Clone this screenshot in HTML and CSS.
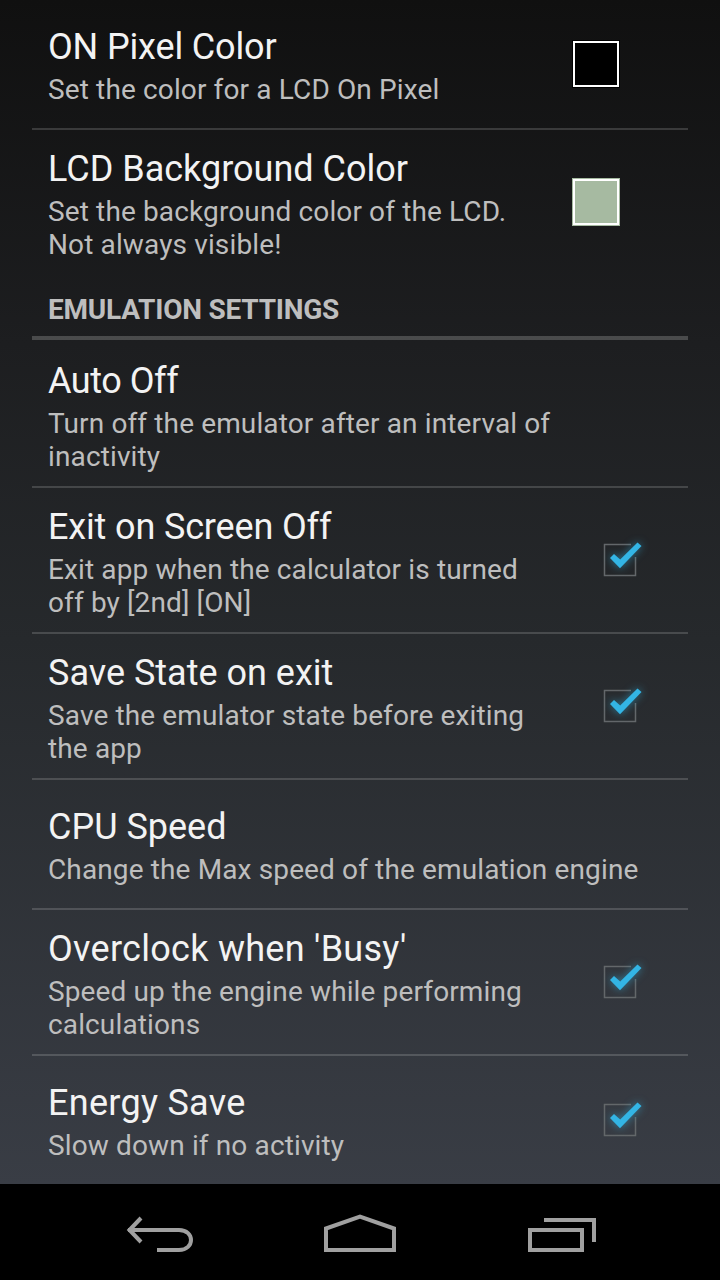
FILE: index.html
```
<!DOCTYPE html>
<html lang="en">
<head>
    <meta charset="UTF-8">
    <meta name="viewport" content="width=device-width, initial-scale=1.0">
    <title>Settings</title>
    <link rel="stylesheet" href="styles.css">
</head>
<body>
    <!-- Shared checkbox drawing -->
    <svg class="defs" width="0" height="0">
        <symbol id="checkbox" viewBox="0 0 64 64">
            <path class="box" d="M43 16.5H16.5V47.5H47.5V29"/>
            <path class="tick" d="M22 30L26 26L32.2 31.5L49.5 14.5L53.5 18L32 40.3Z"/>
        </symbol>
    </svg>

    <main class="settings">
        <div class="item short">
            <div class="text">
                <h2 class="snug">ON Pixel Color</h2>
                <p>Set the color for a LCD On Pixel</p>
            </div>
            <div class="widget color-widget"><span class="swatch swatch-on"></span></div>
        </div>
        <div class="item">
            <div class="text">
                <h2>LCD Background Color</h2>
                <p>Set the background color of the LCD. Not always visible!</p>
            </div>
            <div class="widget color-widget"><span class="swatch swatch-lcd"></span></div>
        </div>

        <h3 class="category">Emulation Settings</h3>

        <div class="item">
            <div class="text">
                <h2 class="tight">Auto Off</h2>
                <p>Turn off the emulator after an interval of inactivity</p>
            </div>
        </div>
        <div class="item">
            <div class="text">
                <h2 class="snug">Exit on Screen Off</h2>
                <p>Exit app when the calculator is turned off by [2nd] [ON]</p>
            </div>
            <div class="widget"><svg class="checkbox"><use href="#checkbox"/></svg></div>
        </div>
        <div class="item">
            <div class="text">
                <h2>Save State on exit</h2>
                <p>Save the emulator state before exiting the app</p>
            </div>
            <div class="widget"><svg class="checkbox"><use href="#checkbox"/></svg></div>
        </div>
        <div class="item short">
            <div class="text">
                <h2>CPU Speed</h2>
                <p>Change the Max speed of the emulation engine</p>
            </div>
        </div>
        <div class="item">
            <div class="text">
                <h2 class="loose">Overclock when 'Busy'</h2>
                <p>Speed up the engine while performing calculations</p>
            </div>
            <div class="widget"><svg class="checkbox"><use href="#checkbox"/></svg></div>
        </div>
        <div class="item short">
            <div class="text">
                <h2 class="loose">Energy Save</h2>
                <p>Slow down if no activity</p>
            </div>
            <div class="widget"><svg class="checkbox"><use href="#checkbox"/></svg></div>
        </div>
    </main>

    <nav class="navbar">
        <svg class="nav-icon" viewBox="0 0 80 64">
            <path d="M23 13L11.5 25L23 37M10 25H61C77 25 77 45 61 45H39"/>
        </svg>
        <svg class="nav-icon" viewBox="0 0 80 64">
            <path d="M6 45V23.5L40 11.5L74 23.5V45Z"/>
        </svg>
        <svg class="nav-icon" viewBox="0 0 80 64">
            <path d="M8 25H60V45H8ZM22 15H72V37"/>
        </svg>
    </nav>
</body>
</html>
```

FILE: styles.css
```
:root {
    --text-color: #f3f3f3;
    --summary-color: #bebebe;
    --accent: #33b5e5;
    --divider: rgba(255, 255, 255, 0.16);
}

* {
    box-sizing: border-box;
}

body {
    margin: 0;
    height: 1280px;
    display: flex;
    flex-direction: column;
    overflow: hidden;
    background: #000;
    color: var(--text-color);
    font-family: Roboto, 'Liberation Sans', sans-serif;
}

.defs {
    display: none;
}

.settings {
    height: 1184px;
    padding: 0 32px;
    overflow: hidden;
    background: linear-gradient(#101010, #1d1e20 29%, #26292c 54%, #393d45);
}

.item {
    display: flex;
    align-items: center;
    min-height: 130px;
    padding: 0 4px 0 16px;
    border-bottom: 2px solid var(--divider);
}

.item:last-child {
    border-bottom-color: transparent;
}

.text {
    flex: 1;
    padding: 18px 8px 13px 0;
}

.text:only-child {
    padding-right: 44px;
}

.short .text {
    padding-bottom: 15px;
}

h2 {
    margin: 0;
    font-size: 36px;
    font-weight: 400;
    line-height: 42px;
}

.snug {
    letter-spacing: -0.15px;
}

.tight {
    letter-spacing: -0.45px;
}

.loose {
    letter-spacing: 0.28px;
}

p {
    margin: 5px 0 0;
    font-size: 28px;
    line-height: 33px;
    letter-spacing: 0.13px;
    color: var(--summary-color);
}

.widget {
    width: 128px;
    display: flex;
    justify-content: center;
}

.color-widget {
    padding-right: 48px;
}

.swatch {
    width: 48px;
    height: 48px;
    border: 1px solid;
    box-shadow: inset 0 0 0 2px #fff;
}

.swatch-on {
    background: #000;
    border-color: #000;
}

.swatch-lcd {
    background: #a6baa1;
    border-color: #a6baa1;
}

.checkbox {
    width: 64px;
    height: 64px;
    overflow: visible;
}

.box {
    fill: none;
    stroke: #63676a;
    stroke-width: 1.5;
}

.tick {
    fill: var(--accent);
    filter: drop-shadow(0 0 4px rgba(51, 181, 229, 0.6));
}

.category {
    height: 66px;
    margin: -2px 0 2px;
    padding: 19px 16px 0;
    border-bottom: 4px solid rgba(255, 255, 255, 0.2);
    color: var(--summary-color);
    font-size: 28px;
    font-weight: 700;
    line-height: 33px;
    letter-spacing: -0.23px;
    text-transform: uppercase;
}

/* The category bar replaces the divider above it */
.item:has(+ .category) {
    border-bottom-color: transparent;
}

.navbar {
    height: 96px;
    display: flex;
    justify-content: space-between;
    padding: 21px 118px 0;
}

.nav-icon {
    width: 80px;
    height: 64px;
    fill: none;
    stroke: #a0a0a0;
    stroke-width: 4;
}
```
